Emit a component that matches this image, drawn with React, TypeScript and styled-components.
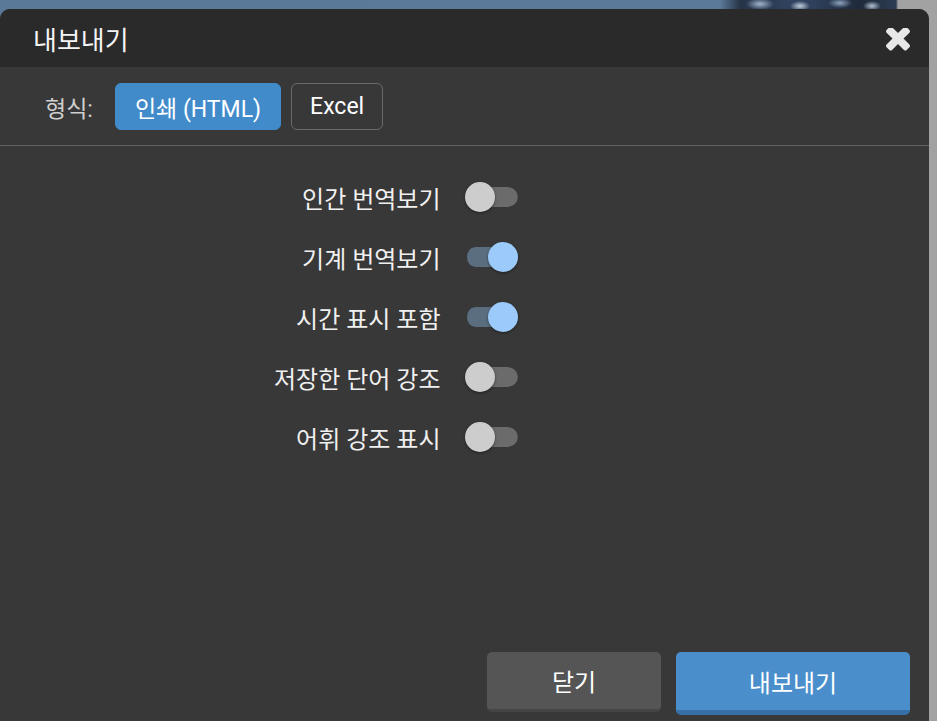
import React, { useState } from "react";
import styled, { createGlobalStyle } from "styled-components";

const GlobalStyle = createGlobalStyle`
  html, body { margin: 0; padding: 0; overflow: hidden; }
  body {
    background-color: #a2a2a2;
    font-family: Roboto, "Noto Sans CJK KR", "Noto Sans", sans-serif;
  }
  * { box-sizing: border-box; }
`;

const Page = styled.div`
  width: 937px;
  height: 721px;
  padding: 9px 8px 0 0;
  background-color: #a2a2a2;
  background-image:
    radial-gradient(ellipse 14px 6px at 760px 4px, #9fb4cc 0, transparent 100%),
    radial-gradient(ellipse 10px 5px at 800px 6px, #c2cfdd 0, transparent 100%),
    radial-gradient(ellipse 12px 5px at 840px 3px, #8fa5bf 0, transparent 100%),
    radial-gradient(ellipse 9px 5px at 872px 6px, #b4c4d6 0, transparent 100%),
    linear-gradient(90deg, #5a7898 0, #5b7a9a 720px, #263448 740px, #324663 800px, #1f2b3c 860px, #2c3c52 896px, transparent 898px);
  background-size: 898px 30px;
  background-repeat: no-repeat;
`;

const Dialog = styled.div`
  width: 929px;
  height: 712px;
  display: flex;
  flex-direction: column;
  background: #383838;
  border-radius: 10px 10px 0 0;
  overflow: hidden;
  color: #f2f2f2;
`;

const Header = styled.div`
  height: 58px;
  flex: none;
  display: flex;
  align-items: center;
  justify-content: space-between;
  padding: 0 19px 0 33px;
  background: #2a2a2a;
`;

const Title = styled.h2`
  margin: 0;
  font-size: 26px;
  font-weight: 400;
  color: #f4f4f4;
  line-height: 1;
  padding-top: 5px;
`;

const CloseButton = styled.button`
  border: 0;
  padding: 0;
  background: transparent;
  width: 24px;
  height: 24px;
  display: flex;
  align-items: center;
  justify-content: center;
  cursor: pointer;
  color: #e8e8e8;
  margin-top: 2px;
`;

const FormatRow = styled.div`
  flex: none;
  display: flex;
  align-items: center;
  padding: 16px 45px 15px 45px;
  border-bottom: 1px solid #626262;
`;

const FormatLabel = styled.span`
  font-size: 23px;
  color: #cfcfcf;
  margin-right: 22px;
`;

const FormatButton = styled.button<{ $active?: boolean }>`
  height: 47px;
  padding: 0 ${(p) => (p.$active ? "19px" : "18px")};
  margin-right: 10px;
  font-family: inherit;
  font-size: 23px;
  color: #ffffff;
  border-radius: 6px;
  border: 1px solid ${(p) => (p.$active ? "#428bca" : "#6a6a6a")};
  background: ${(p) => (p.$active ? "#428bca" : "transparent")};
  cursor: pointer;
`;

const Options = styled.div`
  flex: 1;
  display: grid;
  grid-template-columns: 1fr 1fr;
  grid-auto-rows: 60px;
  align-content: start;
  padding-top: 21px;
`;

const OptionLabel = styled.label`
  display: flex;
  align-items: center;
  justify-content: flex-end;
  padding-right: 24px;
  font-size: 24px;
  color: #f0f0f0;
`;

const SwitchCell = styled.div`
  display: flex;
  align-items: center;
`;

const Track = styled.button<{ $on: boolean }>`
  position: relative;
  width: 53px;
  height: 20px;
  padding: 0;
  border: 0;
  border-left: 2px solid transparent;
  background-clip: padding-box;
  border-radius: 10px;
  background-color: ${(p) => (p.$on ? "#5a6e80" : "#6b6b6b")};
  cursor: pointer;
`;

const Thumb = styled.span<{ $on: boolean }>`
  position: absolute;
  top: -5px;
  left: ${(p) => (p.$on ? "21px" : "-2px")};
  width: 30px;
  height: 30px;
  border-radius: 50%;
  background: ${(p) => (p.$on ? "#9ccbfb" : "#cdcdcd")};
  box-shadow: 0 1px 3px rgba(0, 0, 0, 0.45);
`;

const Footer = styled.div`
  flex: none;
  display: flex;
  justify-content: flex-end;
  gap: 15px;
  padding: 0 19px 6px 0;
`;

const FooterButton = styled.button<{ $primary?: boolean }>`
  width: ${(p) => (p.$primary ? "234px" : "174px")};
  height: ${(p) => (p.$primary ? "63px" : "60px")};
  align-self: flex-start;
  border: 0;
  border-radius: 5px;
  border-bottom: ${(p) => (p.$primary ? "5px solid #3670a6" : "3px solid #454545")};
  background: ${(p) => (p.$primary ? "#4a8fcc" : "#555555")};
  color: #ffffff;
  font-family: inherit;
  font-size: 24px;
  cursor: pointer;
  padding: 0;
`;

const options = [
  { label: "인간 번역보기", on: false },
  { label: "기계 번역보기", on: true },
  { label: "시간 표시 포함", on: true },
  { label: "저장한 단어 강조", on: false },
  { label: "어휘 강조 표시", on: false },
];

function CloseIcon() {
  return (
    <svg width="24" height="23" viewBox="110 346 1188 1100" fill="currentColor">
      <path d="M1298 1214q0 40-28 68l-136 136q-28 28-68 28t-68-28l-294-294-294 294q-28 28-68 28t-68-28l-136-136q-28-28-28-68t28-68l294-294-294-294q-28-28-28-68t28-68l136-136q28-28 68-28t68 28l294 294 294-294q28-28 68-28t68 28l136 136q28 28 28 68t-28 68l-294 294 294 294q28 28 28 68z" />
    </svg>
  );
}

export default function App() {
  const [format, setFormat] = useState<"html" | "excel">("html");
  const [values, setValues] = useState(options.map((o) => o.on));

  return (
    <>
      <GlobalStyle />
      <Page>
        <Dialog>
          <Header>
            <Title>내보내기</Title>
            <CloseButton aria-label="닫기">
              <CloseIcon />
            </CloseButton>
          </Header>
          <FormatRow>
            <FormatLabel>형식:</FormatLabel>
            <FormatButton $active={format === "html"} onClick={() => setFormat("html")}>
              인쇄 (HTML)
            </FormatButton>
            <FormatButton $active={format === "excel"} onClick={() => setFormat("excel")}>
              Excel
            </FormatButton>
          </FormatRow>
          <Options>
            {options.map((o, i) => (
              <React.Fragment key={o.label}>
                <OptionLabel>{o.label}</OptionLabel>
                <SwitchCell>
                  <Track
                    $on={values[i]}
                    onClick={() => setValues((v) => v.map((x, j) => (j === i ? !x : x)))}
                  >
                    <Thumb $on={values[i]} />
                  </Track>
                </SwitchCell>
              </React.Fragment>
            ))}
          </Options>
          <Footer>
            <FooterButton>닫기</FooterButton>
            <FooterButton $primary>내보내기</FooterButton>
          </Footer>
        </Dialog>
      </Page>
    </>
  );
}
